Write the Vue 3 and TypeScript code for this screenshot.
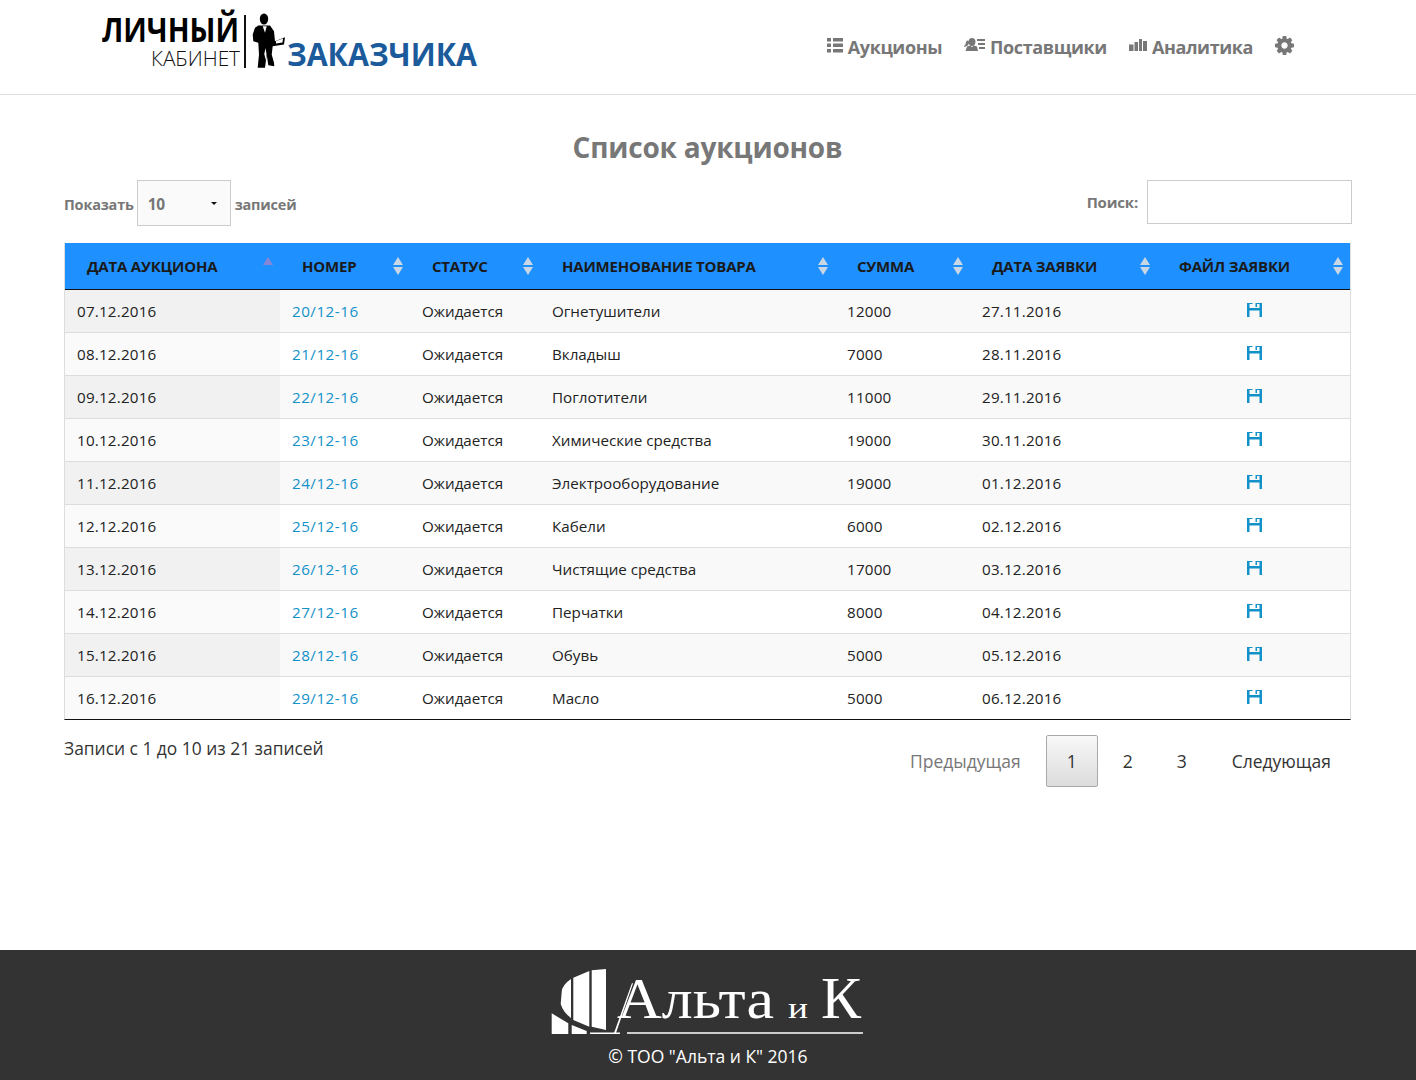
<template>
  <div class="page">
    <header class="topbar">
      <a class="logo" href="#">
        <svg width="400" height="90" viewBox="0 0 400 90">
          <text x="2" y="42" class="logo-main" textLength="137" lengthAdjust="spacingAndGlyphs">ЛИЧНЫЙ</text>
          <text x="51" y="66" class="logo-sub" textLength="89" lengthAdjust="spacingAndGlyphs">КАБИНЕТ</text>
          <rect x="144" y="15" width="2" height="53" fill="#111" />
          <ellipse cx="164" cy="19" rx="4.200" ry="5.500" fill="#000" />
          <path fill="#000" d="M158.300 25.500H170l4 5.700 1 10 10-4-1 7.300-11.300 1.700-1 8.300 2.300 8.300.3 3.400-6-1-1.600-10.700-1.700 13.300h-7.300l1.300-13.300-.7-11.700-5-1.600-.6-6.700 2.300-6.700z" />
          <path fill="#fff" d="M162.700 26.200h4l-1.700 6.600zM176 41l7-2.500-.5 4-6.500 1zM164.300 54l1.200-6 1 6-.8 6z" />
          <text x="187" y="66" class="logo-blue" textLength="190" lengthAdjust="spacingAndGlyphs">ЗАКАЗЧИКА</text>
        </svg>
      </a>
      <nav class="nav">
        <a class="nav-link" href="#">
          <svg width="16" height="15" viewBox="0 0 16 15"><path fill="#777" d="M0 0h4v3.500H0zM6 0h10v3.500H6zM0 5.500h4V9H0zM6 5.500h10V9H6zM0 11h4v3.500H0zM6 11h10v3.500H6z" /></svg>
          Аукционы
        </a>
        <a class="nav-link" href="#">
          <svg width="21" height="14" viewBox="0 0 21 14"><path fill="#777" d="M8 0c2.200 0 3.500 1.500 3.500 3.700S10.200 8 8 8 4.500 6 4.500 3.700 5.800 0 8 0zM3 8.500l3-1 2 1.500 2-1.500 3 1 1 4.500H1.500zM3.500 2.500c1 0 1.200 1 1.200 2.500 0 1-.3 2-1 2.500L.5 9 0 8l1.500-1.500C1.700 4.500 2.500 2.500 3.500 2.500zM13 1h8v2h-8zM14 5h7v2h-7zM15 9h6v2h-6z" /></svg>
          Поставщики
        </a>
        <a class="nav-link" href="#">
          <svg width="18" height="12" viewBox="0 0 18 12"><path fill="#777" d="M0 5.500h4.500V12H0zM5.500 3H9v9H5.500zM10 0h3v12h-3zM14 2h4v10h-4z" /></svg>
          Аналитика
        </a>
        <a class="nav-cog" href="#">
          <svg width="19" height="19" viewBox="0 0 1536 1536"><path fill="#777" d="M1024 768q0-106-75-181t-181-75-181 75-75 181 75 181 181 75 181-75 75-181zm512-109v222q0 12-8 23t-20 13l-185 28q-19 54-39 91 35 50 107 138 10 12 10 25t-9 23q-27 37-99 108t-94 71q-12 0-26-9l-138-108q-44 23-91 38-16 136-29 186-7 28-36 28H657q-14 0-24.500-8.500T621 1506l-28-184q-49-16-90-37l-141 107q-10 9-25 9-14 0-25-11-126-114-165-168-7-10-7-23 0-12 8-23 15-21 51-66.500t54-70.500q-27-50-41-99L29 913q-13-2-21-12.500T0 877V655q0-12 8-23t19-13l186-28q14-46 39-92-40-57-107-138-10-12-10-24 0-10 9-23 26-36 98.500-107.500T337 135q13 0 26 10l138 107q44-23 91-38 16-136 29-186 7-28 36-28h222q14 0 24.500 8.500T915 30l28 184q49 16 90 37l142-107q9-9 24-9 13 0 25 10 129 119 165 170 7 8 7 22 0 12-8 23-15 21-51 66.500t-54 70.500q26 50 41 98l183 28q13 2 21 12.500t8 23.500z" /></svg>
        </a>
      </nav>
    </header>

    <main class="content">
      <h1 class="title">Список аукционов</h1>

      <div class="controls">
        <label class="length">
          Показать
          <span class="select">10<i class="caret"></i></span>
          записей
        </label>
        <label class="search">
          Поиск:
          <input class="search-input" type="text" />
        </label>
      </div>

      <table class="grid">
        <colgroup>
          <col v-for="w in widths" :key="w.id" :style="{ width: w.px + 'px' }" />
        </colgroup>
        <thead>
          <tr>
            <th v-for="(h, i) in headers" :key="h">
              {{ h }}
              <span v-if="i === 0" class="sort sort-active"></span>
              <span v-else class="sort"></span>
            </th>
          </tr>
        </thead>
        <tbody>
          <tr v-for="r in rows" :key="r.num">
            <td class="sorted digits">{{ r.date }}</td>
            <td><a class="link" href="#">{{ r.num }}</a></td>
            <td>Ожидается</td>
            <td>{{ r.name }}</td>
            <td class="digits">{{ r.sum }}</td>
            <td class="digits">{{ r.applied }}</td>
            <td class="file">
              <svg width="15" height="14" viewBox="0 0 15 14"><path fill="#1391c9" d="M0 0h5.500v1H2.500v4h10V1H10v3H8.500V0H15v14h-2.500V7.500h-10V14H0z" /></svg>
            </td>
          </tr>
        </tbody>
      </table>

      <div class="below">
        <div class="info">Записи с 1 до 10 из 21 записей</div>
        <div class="pager">
          <a class="page-btn muted" href="#">Предыдущая</a>
          <a class="page-btn current" href="#">1</a>
          <a class="page-btn num" href="#">2</a>
          <a class="page-btn num" href="#">3</a>
          <a class="page-btn" href="#">Следующая</a>
        </div>
      </div>
    </main>

    <footer class="footer">
      <svg class="footer-logo" width="314" height="78" viewBox="0 -10 314 78">
        <path fill="#fff" d="M20 11Q11 17 10.700 24L9.700 36Q12 44 20 50zM22.300 9.700L38.300 3v55.700L22.300 52zM40.700 2.300L55 1v61l-14.300-3.300z" />
        <path fill="#fff" d="M.7 45.300l16.600 10V66H.7zM20.700 57l15 6v3h-15zM39 64.500l30 0V66H39z" />
        <text x="66" y="50" class="footer-name" textLength="157" lengthAdjust="spacingAndGlyphs">Альта</text>
        <text x="237" y="50" class="footer-and" textLength="20" lengthAdjust="spacingAndGlyphs">и</text>
        <text x="270" y="50" class="footer-k">К</text>
        <path fill="#fff" d="M63 65l18-50 1 .5-17 49.500zM76 64.200h236v1.600H76z" />
      </svg>
      <div class="copyright">© ТОО "Альта и К" 2016</div>
    </footer>
  </div>
</template>

<script setup lang="ts">
interface Row {
  date: string;
  num: string;
  name: string;
  sum: number;
  applied: string;
}

const headers = ['ДАТА АУКЦИОНА', 'НОМЕР', 'СТАТУС', 'НАИМЕНОВАНИЕ ТОВАРА', 'СУММА', 'ДАТА ЗАЯВКИ', 'ФАЙЛ ЗАЯВКИ'];

const widths = [215, 130, 130, 295, 135, 187, 193].map((px, id) => ({ id, px }));

const rows: Row[] = [
  { date: '07.12.2016', num: '20/12-16', name: 'Огнетушители', sum: 12000, applied: '27.11.2016' },
  { date: '08.12.2016', num: '21/12-16', name: 'Вкладыш', sum: 7000, applied: '28.11.2016' },
  { date: '09.12.2016', num: '22/12-16', name: 'Поглотители', sum: 11000, applied: '29.11.2016' },
  { date: '10.12.2016', num: '23/12-16', name: 'Химические средства', sum: 19000, applied: '30.11.2016' },
  { date: '11.12.2016', num: '24/12-16', name: 'Электрооборудование', sum: 19000, applied: '01.12.2016' },
  { date: '12.12.2016', num: '25/12-16', name: 'Кабели', sum: 6000, applied: '02.12.2016' },
  { date: '13.12.2016', num: '26/12-16', name: 'Чистящие средства', sum: 17000, applied: '03.12.2016' },
  { date: '14.12.2016', num: '27/12-16', name: 'Перчатки', sum: 8000, applied: '04.12.2016' },
  { date: '15.12.2016', num: '28/12-16', name: 'Обувь', sum: 5000, applied: '05.12.2016' },
  { date: '16.12.2016', num: '29/12-16', name: 'Масло', sum: 5000, applied: '06.12.2016' },
];
</script>

<style>
html,
body {
  margin: 0;
  background: #fff;
}
</style>

<style scoped>
.page {
  min-height: 1080px;
  display: flex;
  flex-direction: column;
  font-family: "Open Sans", "Noto Sans", sans-serif;
  color: #222;
}

.topbar {
  height: 94px;
  border-bottom: 1px solid #ddd;
  display: flex;
  align-items: flex-start;
  justify-content: space-between;
  padding: 0 122px 0 100px;
}

.logo {
  display: block;
}

.logo svg {
  display: block;
}

.logo-main {
  font: 700 34px "Open Sans", sans-serif;
  fill: #000;
}

.logo-sub {
  font: 300 21px "Open Sans", sans-serif;
  fill: #111;
}

.logo-blue {
  font: 700 32px "Open Sans", sans-serif;
  fill: #1b5a9b;
}

.nav {
  display: flex;
  align-items: center;
  gap: 22px;
  margin-top: 35px;
}

.nav-link {
  display: flex;
  align-items: center;
  gap: 5px;
  font-size: 18px;
  font-weight: 700;
  letter-spacing: -0.4px;
  color: #777;
  text-decoration: none;
}

.nav-link svg {
  margin-bottom: 4px;
}

.nav-cog {
  display: block;
  height: 19px;
  margin-bottom: 4px;
}

.content {
  flex: 1;
  padding: 0 65px 0 64px;
}

.title {
  margin: 32px 0 0;
  text-align: center;
  font-size: 28px;
  line-height: 40px;
  font-weight: 700;
  letter-spacing: -0.2px;
  color: #777;
}

.controls {
  display: flex;
  justify-content: space-between;
  margin-top: 13px;
  height: 63px;
  font-size: 14.500px;
  font-weight: 700;
  color: #777;
}

.length,
.search {
  display: flex;
  align-items: flex-start;
  letter-spacing: -0.2px;
  line-height: 50px;
}

.search {
  font-size: 15px;
  line-height: 44px;
  margin-right: -1px;
}

.select {
  width: 94px;
  height: 46px;
  margin: 0 4px 0 3px;
  padding-left: 10px;
  border: 1px solid #ccc;
  background: #fafafa;
  box-sizing: border-box;
  font-size: 15.500px;
  line-height: 46px;
  position: relative;
}

.caret {
  position: absolute;
  right: 13px;
  top: 21px;
  border: 3px solid transparent;
  border-top-color: #111;
  border-bottom: 0;
}

.search-input {
  width: 205px;
  height: 44px;
  margin-left: 9px;
  border: 1px solid #ccc;
  background: #fff;
  box-sizing: border-box;
  outline: none;
}

.grid {
  width: 1287px;
  table-layout: fixed;
  border-collapse: separate;
  border-spacing: 0;
  border-left: 1px solid #ddd;
  border-right: 1px solid #ddd;
  border-bottom: 1px solid #111;
  box-sizing: border-box;
  font-size: 15.200px;
}

.grid th {
  position: relative;
  height: 46px;
  padding: 0 0 0 22px;
  border-bottom: 1px solid #111;
  background: #1e90ff;
  color: #1a1a1a;
  text-align: left;
  font-size: 15px;
  font-weight: 700;
  letter-spacing: -0.2px;
  white-space: nowrap;
}

.sort {
  position: absolute;
  right: 7px;
  top: 14px;
  width: 10px;
  height: 18px;
}

.sort::before,
.sort::after {
  content: "";
  position: absolute;
  left: 0;
  border-left: 5px solid transparent;
  border-right: 5px solid transparent;
}

.sort::before {
  top: 0;
  border-bottom: 8px solid #c9d6e3;
}

.sort::after {
  bottom: 0;
  border-top: 8px solid #c9d6e3;
}

.sort-active::before {
  border-bottom-color: #8686d8;
}

.sort-active::after {
  display: none;
}

.grid td {
  height: 42px;
  padding: 0 0 0 12px;
  border-top: 1px solid #ddd;
  color: #222;
  white-space: nowrap;
}

.grid td.digits {
  letter-spacing: 0.2px;
}

.grid tbody tr:first-child td {
  border-top: 0;
}

.grid tbody tr:nth-child(odd) td {
  background: #f9f9f9;
}

.grid tbody tr:nth-child(odd) td.sorted {
  background: #f1f1f1;
}

.grid tbody tr:nth-child(even) td.sorted {
  background: #fafafa;
}

.link {
  color: #1391c9;
  text-decoration: none;
  letter-spacing: 0.5px;
}

.grid td.file {
  padding-left: 90px;
}

.file svg {
  display: block;
  margin-bottom: 3px;
}

.below {
  display: flex;
  justify-content: space-between;
  align-items: flex-start;
}

.info {
  margin-top: 16px;
  font-size: 17.400px;
  line-height: 24px;
  color: #333;
}

.pager {
  display: flex;
  gap: 4px;
  margin-top: 15px;
  margin-right: -1px;
}

.page-btn {
  height: 52px;
  padding: 0 20px;
  box-sizing: border-box;
  border: 1px solid transparent;
  border-radius: 2px;
  display: flex;
  align-items: center;
  justify-content: center;
  font-size: 17.500px;
  color: #333;
  text-decoration: none;
}

.muted {
  color: #777;
}

.num {
  width: 50px;
}

.current {
  width: 52px;
  margin-right: 1px;
  border-color: #aaa;
  background: linear-gradient(to bottom, #f8f8f8, #dcdcdc);
}

.footer {
  height: 130px;
  background: #333;
  display: flex;
  flex-direction: column;
  align-items: center;
}

.footer-logo {
  display: block;
  margin-top: 8px;
}

.footer-name {
  font: 400 56px "Liberation Serif", serif;
  fill: #fff;
}

.footer-and {
  font: 400 30px "Liberation Serif", serif;
  fill: #fff;
}

.footer-k {
  font: 400 60px "Liberation Serif", serif;
  fill: #fff;
}

.copyright {
  margin-top: 8px;
  color: #fff;
  font-size: 17.500px;
  line-height: 24px;
}
</style>
